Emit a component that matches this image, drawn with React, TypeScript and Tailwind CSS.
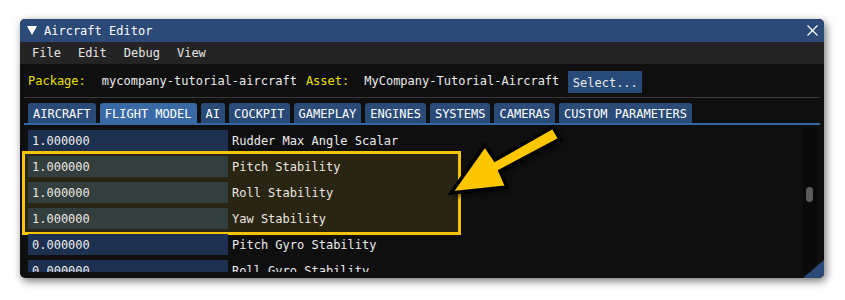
import React from "react";

const mono = { fontFamily: '"DejaVu Sans Mono", "Liberation Mono", monospace' };

const tabs = ["AIRCRAFT", "FLIGHT MODEL", "AI", "COCKPIT", "GAMEPLAY", "ENGINES", "SYSTEMS", "CAMERAS", "CUSTOM PARAMETERS"];

function Row({ value, label, highlighted }: { value: string; label: string; highlighted?: boolean }) {
  return (
    <div className="flex h-[21px] items-center shrink-0">
      <div className={`w-[200px] h-full flex items-center pl-[4px] pt-[1px] ${highlighted ? "bg-[#333e3e]" : "bg-[#1d3050]"}`}>
        {value}
      </div>
      <div className="ml-[4px] pt-[1px]">{label}</div>
    </div>
  );
}

export default function App() {
  return (
    <div className="relative w-[845px] h-[300px] bg-white pt-[19px] pl-[20px] text-[12px] leading-none text-[#ececec]" style={mono}>
      <div className="relative w-[804px] h-[259px] rounded-[5px] bg-[#0f0f0f] overflow-hidden flex flex-col shadow-[2px_3px_8px_rgba(0,0,0,0.55)]">
        {/* title bar */}
        <div className="h-[23px] shrink-0 bg-[#2b4a78] flex items-center pl-[7px] pr-[6px] text-white">
          <svg width="10" height="9" viewBox="0 0 10 9">
            <polygon points="0,0 10,0 5,9" fill="white" />
          </svg>
          <span className="ml-[7px]">Aircraft Editor</span>
          <svg className="ml-auto" width="11" height="11" viewBox="0 0 11 11">
            <path d="M0.5 0.5 L10.5 10.5 M10.5 0.5 L0.5 10.5" stroke="white" strokeWidth="1.2" />
          </svg>
        </div>
        {/* menu bar */}
        <div className="h-[22px] shrink-0 bg-[#242424] flex items-center pl-[12px] gap-[17px] text-[#e4e4e4]">
          <span>File</span>
          <span>Edit</span>
          <span>Debug</span>
          <span>View</span>
        </div>
        {/* package row */}
        <div className="h-[33px] shrink-0 flex items-center pl-[8px]">
          <span className="text-[#e8e000]">Package:</span>
          <span className="ml-[16px]">mycompany-tutorial-aircraft</span>
          <span className="ml-[9px] text-[#e8e000]">Asset:</span>
          <span className="ml-[15px]">MyCompany-Tutorial-Aircraft</span>
          <div className="ml-[9px] h-[22px] w-[74px] mt-[2px] bg-[#274a78] flex items-center justify-center pt-[3px]">Select...</div>
        </div>
        <div className="mx-[4px] h-px shrink-0 bg-[#3a3a3a]" />
        {/* tabs */}
        <div className="mt-[5px] h-[20px] shrink-0 flex gap-[4px] pl-[8px]">
          {tabs.map((t) => (
            <div
              key={t}
              className={`h-full px-[5px] pt-[1px] rounded-t-[3px] flex items-center text-white ${t === "FLIGHT MODEL" ? "bg-[#3a6aa6]" : "bg-[#2a4a78]"}`}
            >
              {t}
            </div>
          ))}
        </div>
        <div className="mx-[4px] h-[2px] shrink-0 bg-[#3566a4]" />
        {/* content */}
        <div className="h-[147px] shrink-0 flex">
          <div className="flex-1 overflow-hidden pl-[8px] pt-[5px] flex flex-col gap-[5px]">
            <Row value="1.000000" label="Rudder Max Angle Scalar" />
            <div className="-mt-[5px] -mb-[6px] -ml-[6px] w-[439px] shrink-0 border-[3px] border-[#f5c400] bg-[#2a2412] pt-[2px] pb-[3px] pl-[3px] flex flex-col gap-[5px] text-[#ebe8e0]">
              <Row value="1.000000" label="Pitch Stability" highlighted />
              <Row value="1.000000" label="Roll Stability" highlighted />
              <Row value="1.000000" label="Yaw Stability" highlighted />
            </div>
            <Row value="0.000000" label="Pitch Gyro Stability" />
            <Row value="0.000000" label="Roll Gyro Stability" />
          </div>
          <div className="w-[14px] mt-[3px] mr-[7px] ml-[6px] bg-[#0a0a0a] relative">
            <div className="absolute left-[3px] top-[59px] w-[7px] h-[15px] rounded-full bg-[#5c5c5c]" />
          </div>
        </div>
        {/* resize grip */}
        <svg className="absolute right-0 bottom-0" width="21" height="18" viewBox="0 0 21 18">
          <polygon points="0,18 21,18 21,0" fill="#2b4a78" />
        </svg>
      </div>
      {/* annotation arrow */}
      <svg className="absolute inset-0 pointer-events-none drop-shadow-[2px_3px_2px_rgba(0,0,0,0.45)]" width="845" height="300" viewBox="0 0 845 300">
        <polygon
          points="451,193 485,145 495,160 553,127 560,139 500,171 507,187"
          fill="#fdc700"
          stroke="#000"
          strokeWidth="3.5"
          strokeLinejoin="miter"
        />
      </svg>
    </div>
  );
}
